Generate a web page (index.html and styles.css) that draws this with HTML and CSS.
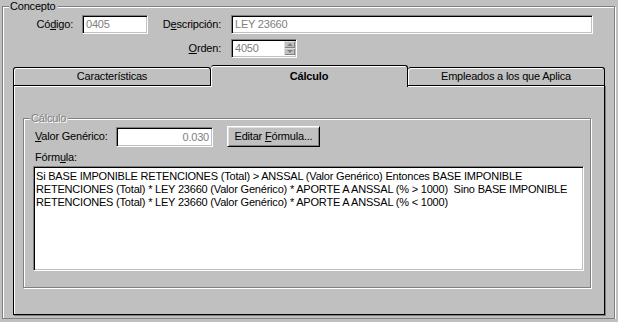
FILE: index.html
```html
<!DOCTYPE html>
<html lang="es">
<head>
    <meta charset="UTF-8">
    <meta name="viewport" content="width=device-width, initial-scale=1.0">
    <title>Concepto</title>
    <link rel="stylesheet" href="styles.css">
</head>
<body>
    <div class="group concepto">
        <span class="group-title">Concepto</span>

        <div class="row">
            <label class="lbl lbl-codigo">Có<u>d</u>igo:</label>
            <div class="field field-codigo">0405</div>
            <label class="lbl lbl-desc">D<u>e</u>scripción:</label>
            <div class="field field-desc">LEY 23660</div>
        </div>
        <div class="row row-orden">
            <label class="lbl lbl-desc"><u>O</u>rden:</label>
            <div class="field field-orden">
                <span>4050</span>
                <div class="spin">
                    <div class="spin-btn"><span class="arrow-up"></span></div>
                    <div class="spin-btn"><span class="arrow-down"></span></div>
                </div>
            </div>
        </div>

        <div class="tabs">
            <div class="tab-row">
                <div class="tab first">Características</div>
                <div class="tab active">Cálculo</div>
                <div class="tab">Empleados a los que Aplica</div>
            </div>
            <div class="tab-panel">
                <div class="group calculo">
                    <span class="group-title disabled">Cálculo</span>
                    <div class="calc-row">
                        <label class="lbl-valor"><u>V</u>alor Genérico:</label>
                        <div class="field field-valor">0.030</div>
                        <button class="btn">Editar <u>F</u>órmula...</button>
                    </div>
                    <div class="formula-lbl">Fórm<u>u</u>la:</div>
                    <div class="field formula">Si BASE IMPONIBLE RETENCIONES (Total) &gt; ANSSAL (Valor Genérico) Entonces BASE IMPONIBLE
RETENCIONES (Total) * LEY 23660 (Valor Genérico) * APORTE A ANSSAL (% &gt; 1000)  Sino BASE IMPONIBLE
RETENCIONES (Total) * LEY 23660 (Valor Genérico) * APORTE A ANSSAL (% &lt; 1000)</div>
                </div>
            </div>
        </div>
    </div>
</body>
</html>
```

FILE: styles.css
```css
body {
    margin: 0;
    background: #c0c0c0;
    font-family: "Liberation Sans", Arial, sans-serif;
    font-size: 11px;
    line-height: 13px;
    letter-spacing: -0.2px;
    color: #000;
}

u {
    text-decoration: underline;
    text-underline-offset: 1px;
}

/* etched group box */
.group {
    position: relative;
    box-sizing: border-box;
    border: 1px solid #808080;
    box-shadow: inset 1px 1px 0 #fff, 1px 1px 0 #fff;
}

.group-title {
    position: absolute;
    top: -7px;
    left: 6px;
    padding: 0 2px 0 1px;
    background: #c0c0c0;
}

.group-title.disabled {
    color: #808080;
    text-shadow: 1px 1px 0 #fff;
}

.concepto {
    margin: 6px 0 0 2px;
    width: 613px;
    height: 313px;
    padding-top: 8px;
}

.row {
    display: flex;
    align-items: center;
    height: 19px;
}

.row-orden {
    margin-top: 5px;
    padding-left: 145px;
}

.lbl {
    box-sizing: border-box;
    text-align: right;
}

.lbl-codigo {
    width: 79px;
    padding-right: 9px;
}

.lbl-desc {
    width: 83px;
    padding-right: 10px;
}

/* sunken text field */
.field {
    box-sizing: border-box;
    height: 19px;
    border: 1px solid;
    border-color: #808080 #fff #fff #808080;
    box-shadow: inset 1px 1px 0 #000, inset -1px -1px 0 #c0c0c0;
    background: #fff;
    color: #808080;
    padding: 2px 3px;
    white-space: nowrap;
}

.field-codigo {
    width: 66px;
}

.field-desc {
    width: 362px;
}

.field-orden {
    width: 66px;
    display: flex;
    justify-content: space-between;
    padding-right: 1px;
}

.spin {
    display: flex;
    flex-direction: column;
    width: 11px;
    margin-top: -1px;
}

.spin-btn {
    height: 8px;
    background: #c0c0c0;
    display: flex;
    align-items: center;
    justify-content: center;
    box-shadow: inset 1px 1px 0 #dfdfdf, inset -1px -1px 0 #808080;
}

.arrow-up,
.arrow-down {
    width: 0;
    height: 0;
    border-left: 3px solid transparent;
    border-right: 3px solid transparent;
}

.arrow-up {
    border-bottom: 3px solid #808080;
}

.arrow-down {
    border-top: 3px solid #808080;
}

/* tab control */
.tabs {
    margin: 7px 0 0 10px;
    width: 592px;
}

.tab-row {
    display: flex;
    align-items: flex-end;
}

.tab {
    flex: 1;
    box-sizing: border-box;
    height: 18px;
    border-top: 1px solid #000;
    border-right: 1px solid #000;
    border-radius: 3px 3px 0 0;
    box-shadow: inset 1px 1px 0 #fff;
    text-align: center;
    line-height: 16px;
}

.tab.first {
    border-left: 1px solid #000;
}

.tab.active {
    position: relative;
    z-index: 1;
    height: 22px;
    margin-bottom: -2px;
    background: #c0c0c0;
    font-weight: bold;
    line-height: 21px;
}

.tab-panel {
    box-sizing: border-box;
    height: 230px;
    border: 1px solid #000;
    box-shadow: inset 1px 1px 0 #fff, 1px 1px 0 #808080;
    padding: 32px 0 0 9px;
}

.calculo {
    width: 568px;
    height: 170px;
    padding: 7px 0 0 0;
}

.calc-row {
    display: flex;
    align-items: center;
    padding-left: 11px;
}

.lbl-valor {
    width: 81px;
}

.field-valor {
    width: 97px;
    height: 20px;
    text-align: right;
    padding-top: 3px;
}

.btn {
    box-sizing: border-box;
    width: 93px;
    height: 21px;
    margin-left: 14px;
    padding: 0;
    font: inherit;
    letter-spacing: inherit;
    color: #000;
    background: #c0c0c0;
    border: 1px solid;
    border-color: #fff #000 #000 #fff;
    box-shadow: inset 1px 1px 0 #dfdfdf, inset -1px -1px 0 #808080;
}

.formula-lbl {
    margin: 4px 0 0 11px;
}

.formula {
    width: 551px;
    height: 105px;
    margin: 2px 0 0 9px;
    color: #000;
    white-space: pre;
    padding: 3px 2px;
}
```
